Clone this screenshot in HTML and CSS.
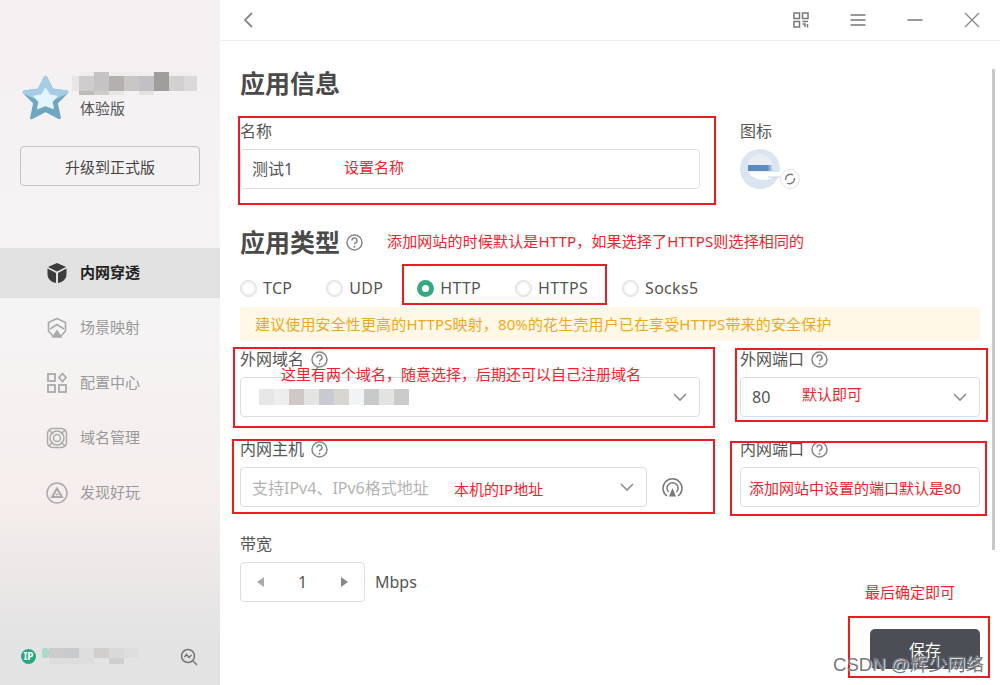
FILE: index.html

```html
<!DOCTYPE html>
<html lang="en">
<head>
    <meta charset="UTF-8">
    <title>应用信息</title>
    <link rel="stylesheet" href="styles.css">
</head>
<body>
<div class="app">
    <!-- Sidebar -->
    <aside class="sidebar">
        <div class="profile">
            <svg class="star" width="51" height="51" viewBox="0 0 48 48">
                <path d="M24 5 L30 17 L44 19 L34 29 L37 43 L24 36 L11 43 L14 29 L4 19 L18 17 Z" fill="#6fa6c0" stroke="#6fa6c0" stroke-width="3" stroke-linejoin="round"/>
                <path d="M24 5 L30 17 L44 19 L33 24 L15 24 L4 19 L18 17 Z" fill="#a6cde3" stroke="#a6cde3" stroke-width="3" stroke-linejoin="round"/>
                <path d="M24 16 L27.500 22 L34 23 L29.500 28 L31 34 L24 31 L17 34 L18.500 28 L14 23 L20.500 22 Z" fill="#e2f4fd" stroke="#e2f4fd" stroke-width="2" stroke-linejoin="round"/>
            </svg>
            <div class="profile-text">
                <svg class="mosaic" width="125" height="23" viewBox="0 0 125 23">
                    <rect x="8" y="0" width="112" height="4" fill="#efecec"/>
                    <rect x="0" y="4" width="7" height="15" fill="#e8e5e6"/>
                    <rect x="7" y="4" width="15" height="15" fill="#cfcccd"/>
                    <rect x="22" y="0" width="15" height="19" fill="#c6c3c4"/>
                    <rect x="37" y="4" width="15" height="15" fill="#b5b0ad"/>
                    <rect x="52" y="4" width="15" height="15" fill="#c9c6c6"/>
                    <rect x="67" y="4" width="15" height="15" fill="#c2c0c4"/>
                    <rect x="82" y="0" width="15" height="19" fill="#a09d9d"/>
                    <rect x="97" y="4" width="15" height="15" fill="#d2d0d1"/>
                    <rect x="112" y="4" width="13" height="15" fill="#dbd9da"/>
                    <rect x="7" y="19" width="15" height="4" fill="#bdbab8"/>
                    <rect x="22" y="19" width="15" height="4" fill="#cfcccc"/>
                    <rect x="37" y="19" width="15" height="4" fill="#e8e5e5"/>
                    <rect x="67" y="19" width="15" height="4" fill="#e4e1e2"/>
                </svg>
                <div class="edition">体验版</div>
            </div>
        </div>
        <button class="upgrade">升级到正式版</button>

        <nav class="nav">
            <a class="nav-item active">
                <svg width="22" height="22" viewBox="0 0 22 22">
                    <path d="M11 1 L20 5 L11 9.500 L2 5 Z" fill="#3c3c3c"/>
                    <path d="M1.500 6.500 L10 11 V21 C5 20 1.500 17 1.500 12 Z" fill="#3c3c3c"/>
                    <path d="M20.500 6.500 L12 11 V21 C17 20 20.500 17 20.500 12 Z" fill="#3c3c3c"/>
                </svg>
                <span>内网穿透</span>
            </a>
            <a class="nav-item">
                <svg width="22" height="22" viewBox="0 0 22 22" fill="none" stroke="#aaa" stroke-width="1.600">
                    <path d="M11 1.500 L19.500 5.500 V14 L15 19 H7 L2.500 14 V5.500 Z"/>
                    <path d="M4 12 L11 7.500 L18 12"/>
                    <path d="M7 20 L11 14 L15 20 Z" fill="#aaa"/>
                </svg>
                <span>场景映射</span>
            </a>
            <a class="nav-item">
                <svg width="22" height="22" viewBox="0 0 22 22" fill="none" stroke="#aaa" stroke-width="1.800">
                    <rect x="2" y="2" width="7" height="7"/>
                    <path d="M16.500 1.500 L20 5.500 L16.500 9.500 L13 5.500 Z"/>
                    <rect x="2" y="13" width="7" height="7"/>
                    <rect x="13" y="13" width="7" height="7"/>
                </svg>
                <span>配置中心</span>
            </a>
            <a class="nav-item">
                <svg width="22" height="22" viewBox="0 0 22 22" fill="none" stroke="#aaa" stroke-width="1.500">
                    <rect x="1.500" y="1.500" width="19" height="19" rx="5"/>
                    <circle cx="11" cy="11" r="7"/>
                    <circle cx="11" cy="11" r="3.500"/>
                    <path d="M3 3 L7 7 M19 3 L15 7 M3 19 L7 15 M19 19 L15 15"/>
                </svg>
                <span>域名管理</span>
            </a>
            <a class="nav-item">
                <svg width="22" height="22" viewBox="0 0 22 22" fill="none" stroke="#aaa" stroke-width="1.500">
                    <circle cx="11" cy="11" r="10"/>
                    <path d="M11 6.500 L16 15 H6 Z" stroke-width="2"/>
                    <path d="M9.500 12.500 H12.500" stroke-width="1.500"/>
                </svg>
                <span>发现好玩</span>
            </a>
        </nav>

        <div class="side-foot">
            <span class="ip-badge">IP</span>
            <svg class="mosaic mosaic-ip" width="97" height="19" viewBox="0 0 97 19">
                <rect x="0" y="1" width="7" height="10" rx="3" fill="#a9dcc6"/>
                <rect x="7" y="1" width="15" height="10" fill="#cccccc"/>
                <rect x="22" y="1" width="15" height="10" fill="#c9cacc"/>
                <rect x="37" y="1" width="15" height="10" fill="#dedede"/>
                <rect x="52" y="1" width="15" height="10" fill="#d0cfcd"/>
                <rect x="67" y="1" width="15" height="10" fill="#d9d9d9"/>
                <rect x="82" y="1" width="15" height="10" fill="#dedede"/>
                <rect x="7" y="11" width="45" height="6" fill="#dddddd"/>
                <rect x="67" y="11" width="15" height="6" fill="#cfcfcf"/>
            </svg>
            <svg class="trace" width="18" height="18" viewBox="0 0 18 18" fill="none" stroke="#777" stroke-width="1.500">
                <circle cx="8" cy="8" r="6.500"/>
                <path d="M4.500 9 L6.500 6.500 L9 9.500 L11.500 7"/>
                <path d="M13 13 L17 17"/>
            </svg>
        </div>
    </aside>

    <!-- Main panel -->
    <main class="main">
        <header class="topbar">
            <svg class="back" width="10" height="16" viewBox="0 0 10 16" fill="none" stroke="#888" stroke-width="1.800">
                <path d="M9 1 L2 8 L9 15"/>
            </svg>
            <div class="win-icons">
                <svg width="16" height="16" viewBox="0 0 16 16" fill="none" stroke="#777" stroke-width="1.500">
                    <rect x="1" y="1" width="5.500" height="5.500"/>
                    <rect x="9.500" y="1" width="5.500" height="5.500"/>
                    <rect x="1" y="9.500" width="5.500" height="5.500"/>
                    <path d="M9.500 9.500 H15 M9.500 12 H12 V15 M14.500 12 V15.500"/>
                </svg>
                <svg width="16" height="16" viewBox="0 0 16 16" stroke="#777" stroke-width="1.500">
                    <path d="M0.500 3 H15.500 M0.500 8 H15.500 M0.500 13 H15.500"/>
                </svg>
                <svg width="16" height="16" viewBox="0 0 16 16" stroke="#777" stroke-width="1.500">
                    <path d="M0.500 8 H15.500"/>
                </svg>
                <svg width="16" height="16" viewBox="0 0 16 16" stroke="#888" stroke-width="1.300">
                    <path d="M1 1 L15 15 M15 1 L1 15"/>
                </svg>
            </div>
        </header>

        <div class="form">
            <h2 class="title">应用信息</h2>
            <div class="row row-name">
                <div class="field">
                    <div class="label">名称</div>
                    <div class="input">测试1</div>
                </div>
                <div class="field">
                    <div class="label">图标</div>
                    <svg class="app-icon" width="60" height="40" viewBox="0 0 60 40">
                        <defs>
                            <linearGradient id="logoBar" x1="0" x2="1" y1="0" y2="0">
                                <stop offset="0" stop-color="#5c8cbf"/>
                                <stop offset="0.8" stop-color="#5c8cbf"/>
                                <stop offset="1" stop-color="#c3d3e4"/>
                            </linearGradient>
                        </defs>
                        <circle cx="20" cy="20" r="20" fill="#dbe5ef"/>
                        <circle cx="20" cy="17" r="12" fill="#e9eef4"/>
                        <rect x="8" y="16" width="24" height="6" fill="url(#logoBar)"/>
                        <path d="M8 23 H40 V28 H33 C29 32 15 33 8 23 Z" fill="#fff"/>
                        <path d="M28 28 H40" stroke="#c9d6e2"/>
                        <circle cx="50" cy="30" r="9.500" fill="#fff" stroke="#e4e4e4"/>
                        <path d="M46 28 A5 5 0 0 1 53 26 M54 32 A5 5 0 0 1 47 34 M45.500 31 L46 28 M54.500 29 L54 32" fill="none" stroke="#777" stroke-width="1.400"/>
                    </svg>
                </div>
            </div>

            <h2 class="title title-type">应用类型
                <svg class="help" width="17" height="17" viewBox="0 0 17 17"><use href="#q"/></svg>
            </h2>

            <div class="radios">
                <label class="radio"><i class="dot"></i>TCP</label>
                <label class="radio"><i class="dot"></i>UDP</label>
                <label class="radio"><i class="dot on"></i>HTTP</label>
                <label class="radio"><i class="dot"></i>HTTPS</label>
                <label class="radio"><i class="dot"></i>Socks5</label>
            </div>
            <div class="notice">建议使用安全性更高的HTTPS映射&#xFF0C;80%的花生壳用户已在享受HTTPS带来的安全保护</div>

            <div class="row row-first">
                <div class="field">
                    <div class="label">外网域名
                        <svg class="help" width="17" height="17" viewBox="0 0 17 17"><use href="#q"/></svg>
                    </div>
                    <div class="input select">
                        <svg class="mosaic" width="158" height="18" viewBox="0 0 158 18">
                            <rect x="7" y="1" width="15" height="16" fill="#e6e6e6"/>
                            <rect x="22" y="1" width="15" height="16" fill="#ededed"/>
                            <rect x="37" y="1" width="15" height="16" fill="#cdc9c6"/>
                            <rect x="52" y="1" width="15" height="16" fill="#e4e4e2"/>
                            <rect x="67" y="1" width="15" height="16" fill="#c9cacf"/>
                            <rect x="82" y="1" width="15" height="16" fill="#d8d6d0"/>
                            <rect x="97" y="1" width="15" height="16" fill="#f2f3f5"/>
                            <rect x="112" y="1" width="15" height="16" fill="#c8c9c9"/>
                            <rect x="127" y="1" width="15" height="16" fill="#e3e3e1"/>
                            <rect x="142" y="1" width="15" height="16" fill="#cbcbcb"/>
                        </svg>
                        <svg class="chev" width="14" height="8" viewBox="0 0 14 8" fill="none" stroke="#8a8a8a" stroke-width="1.600"><path d="M1 1 L7 7 L13 1"/></svg>
                    </div>
                </div>
                <div class="field">
                    <div class="label">外网端口
                        <svg class="help" width="17" height="17" viewBox="0 0 17 17"><use href="#q"/></svg>
                    </div>
                    <div class="input select">80
                        <svg class="chev" width="14" height="8" viewBox="0 0 14 8" fill="none" stroke="#8a8a8a" stroke-width="1.600"><path d="M1 1 L7 7 L13 1"/></svg>
                    </div>
                </div>
            </div>

            <div class="row row-second">
                <div class="field">
                    <div class="label">内网主机
                        <svg class="help" width="17" height="17" viewBox="0 0 17 17"><use href="#q"/></svg>
                    </div>
                    <div class="host">
                        <div class="input select placeholder">支持IPv4、IPv6格式地址
                            <svg class="chev" width="14" height="8" viewBox="0 0 14 8" fill="none" stroke="#8a8a8a" stroke-width="1.600"><path d="M1 1 L7 7 L13 1"/></svg>
                        </div>
                        <svg class="radar" width="21" height="21" viewBox="0 0 21 21" fill="none" stroke="#777" stroke-width="1.500">
                            <path d="M5 19 A9.500 9.500 0 1 1 16 19"/>
                            <path d="M6.500 15 A5.500 5.500 0 1 1 14.500 15"/>
                            <path d="M10.500 11 L14 19.500 H7 Z" fill="#777" stroke="none"/>
                        </svg>
                    </div>
                </div>
                <div class="field">
                    <div class="label">内网端口
                        <svg class="help" width="17" height="17" viewBox="0 0 17 17"><use href="#q"/></svg>
                    </div>
                    <div class="input"></div>
                </div>
            </div>

            <div class="band">
                <div class="label">带宽</div>
                <div class="band-row">
                    <div class="stepper">
                        <i class="tri tri-left"></i>
                        <span>1</span>
                        <i class="tri tri-right"></i>
                    </div>
                    <span class="unit">Mbps</span>
                </div>
            </div>

            <div class="actions">
                <button class="save">保存</button>
            </div>
        </div>
        <div class="scrollbar"></div>
    </main>

    <!-- Screenshot annotations lying over the form -->
    <div class="notes">
        <div class="box box-name"></div>
        <div class="box box-http"></div>
        <div class="box box-domain"></div>
        <div class="box box-wport"></div>
        <div class="box box-host"></div>
        <div class="box box-nport"></div>
        <div class="box box-save"></div>
        <span class="note note-name">设置名称</span>
        <span class="note note-type">添加网站的时候默认是HTTP&#xFF0C;如果选择了HTTPS则选择相同的</span>
        <span class="note note-domain">这里有两个域名&#xFF0C;随意选择&#xFF0C;后期还可以自己注册域名</span>
        <span class="note note-wport">默认即可</span>
        <span class="note note-host">本机的IP地址</span>
        <span class="note note-nport">添加网站中设置的端口默认是80</span>
        <span class="note note-save">最后确定即可</span>
        <span class="watermark">CSDN @辉少网络</span>
    </div>

    <svg class="defs" width="0" height="0">
        <symbol id="q" viewBox="0 0 17 17">
            <circle cx="8.500" cy="8.500" r="7.500" fill="none" stroke="#888" stroke-width="1.500"/>
            <path d="M6 6.500 A2.500 2.500 0 1 1 9.500 8.800 C8.800 9.200 8.500 9.600 8.500 10.500" fill="none" stroke="#888" stroke-width="1.500"/>
            <circle cx="8.500" cy="12.700" r="1" fill="#888"/>
        </symbol>
    </svg>
</div>
</body>
</html>
```

FILE: styles.css

```css
* { box-sizing: border-box; }

body {
    margin: 0;
    font-family: "Noto Sans", "Noto Sans CJK SC", sans-serif;
    color: #555;
    background: #fff;
}
.app {
    position: relative;
    display: flex;
    width: 1000px; height: 685px;
    overflow: hidden;
}
.defs { position: absolute; }

/* Sidebar */
.sidebar {
    width: 220px;
    flex-shrink: 0;
    display: flex;
    flex-direction: column;
    padding-top: 72px;
    background: linear-gradient(#f5f0f1 0, #f5f4f5 300px, #f5eeec 500px, #e3e3e3 640px);
}
.profile {
    display: flex;
    align-items: flex-start;
    height: 74px;
    padding-left: 20px;
}
.star { display: block; margin: 0 1px 0 0; }
.mosaic { display: block; filter: blur(0.6px); }
.edition {
    margin: 2px 0 0 8px;
    font-size: 15px;
    line-height: 22px;
    color: #555;
}
.upgrade {
    display: block;
    margin: 0 20px;
    width: 180px; height: 40px;
    border: 1px solid #c4c2c2;
    border-radius: 4px;
    background: transparent;
    font-family: inherit;
    font-size: 15px;
    color: #444;
}
.nav {
    display: flex;
    flex-direction: column;
    gap: 5px;
    margin-top: 62px;
}
.nav-item {
    display: flex;
    align-items: center;
    gap: 12px;
    height: 50px;
    padding-left: 46px;
    font-size: 15px;
    color: #999;
}
.nav-item span { padding-bottom: 4px; }
.nav-item.active {
    background: #e1e1e1;
    color: #222;
    font-weight: 700;
}
.side-foot {
    display: flex;
    align-items: center;
    margin-top: auto;
    height: 19px;
    margin-bottom: 19px;
    padding-left: 21px;
}
.ip-badge {
    width: 15px; height: 15px;
    border-radius: 50%;
    background: #27a87b;
    color: #fff;
    font-size: 10px;
    line-height: 15px;
    text-align: center;
    font-weight: 700;
}
.mosaic-ip { margin-left: 6px; }
.trace { margin-left: 41px; }

/* Main panel */
.main {
    position: relative;
    flex: 1;
}
.topbar {
    display: flex;
    align-items: center;
    justify-content: space-between;
    height: 41px;
    padding: 0 20px 0 23px;
    border-bottom: 1px solid #eee;
}
.win-icons {
    display: flex;
    gap: 41px;
}
.win-icons svg, .back { display: block; }

.form { padding: 26px 20px 0; }
.title {
    display: flex;
    align-items: center;
    gap: 6px;
    height: 34px;
    margin: 0;
    padding-bottom: 2px;
    font-size: 25px;
    line-height: 32px;
    font-weight: 700;
    color: #4a4a4a;
}
.title-type { margin-top: 37px; }
.row {
    display: grid;
    grid-template-columns: 460px 240px;
    column-gap: 40px;
}
.row-name { margin-top: 20px; }
.row-first { margin-top: 8px; }
.row-second { margin-top: 22px; }
.label {
    display: flex;
    align-items: center;
    gap: 7px;
    height: 20px;
    margin-bottom: 8px;
    font-size: 16px;
    line-height: 20px;
    color: #555;
}
.help { display: block; }
.input {
    display: flex;
    align-items: center;
    justify-content: space-between;
    height: 40px;
    padding: 0 12px 0 11px;
    border: 1px solid #ddd;
    border-radius: 4px;
    background: #fff;
    font-size: 16px;
    color: #555;
}
.row-name .input { padding-bottom: 3px; }
.placeholder { color: #b3b3b3; flex: 1; }
.chev { display: block; }
.host {
    display: flex;
    align-items: center;
    gap: 15px;
    padding-right: 17px;
}
.radar { display: block; }
.app-icon { display: block; }

.radios {
    display: flex;
    gap: 34px;
    margin-top: 18px;
}
.radio {
    display: flex;
    align-items: center;
    gap: 6px;
    height: 20px;
    font-size: 16px;
    letter-spacing: 0.300px;
    color: #555;
}
.dot {
    width: 17px; height: 17px;
    border: 1px solid #ddd;
    border-radius: 50%;
    box-shadow: inset 0 0 3px #ccc;
}
.dot.on {
    border: 5px solid #38a882;
    box-shadow: none;
    background: #fff;
}
.notice {
    height: 34px;
    margin-top: 9px;
    padding-left: 15px;
    background: #fff8e6;
    border-radius: 4px;
    color: #eea820;
    font-size: 15px;
    line-height: 35px;
    letter-spacing: 0.140px;
}

.band { margin-top: 27px; }
.band-row {
    display: flex;
    align-items: center;
    gap: 10px;
}
.stepper {
    display: flex;
    align-items: center;
    justify-content: space-between;
    width: 125px; height: 40px;
    padding: 0 16px;
    border: 1px solid #ddd;
    border-radius: 4px;
    font-size: 16px;
    color: #555;
}
.tri {
    width: 0; height: 0;
    border-top: 5px solid transparent;
    border-bottom: 5px solid transparent;
}
.tri-left { border-right: 7px solid #aaa; }
.tri-right { border-left: 7px solid #888; }
.unit { font-size: 16px; color: #555; }

.actions {
    display: flex;
    justify-content: flex-end;
    margin-top: 27px;
}
.save {
    width: 110px; height: 40px;
    border: 0;
    border-radius: 5px;
    background: #4c4e55;
    color: #fff;
    font-family: inherit;
    font-size: 16px;
    padding: 0;
}
.scrollbar {
    position: absolute;
    top: 69px; right: 5px;
    width: 3px; height: 481px;
    background: #c8c8c8;
}

/* Annotations */
.notes {
    position: absolute;
    top: 0; left: 0;
    width: 100%; height: 100%;
    pointer-events: none;
}
.box {
    position: absolute;
    border: 2px solid #ed1c24;
}
.box-name { left: 238px; top: 116px; width: 478px; height: 89px; }
.box-http { left: 402px; top: 264px; width: 205px; height: 41px; }
.box-domain { left: 233px; top: 347px; width: 482px; height: 81px; }
.box-wport { left: 735px; top: 348px; width: 253px; height: 74px; }
.box-host { left: 232px; top: 439px; width: 483px; height: 75px; }
.box-nport { left: 730px; top: 441px; width: 257px; height: 75px; }
.box-save { left: 848px; top: 616px; width: 142px; height: 62px; }
.note {
    position: absolute;
    font-size: 15px;
    line-height: 20px;
    color: #f0222e;
    white-space: nowrap;
}
.note-name { left: 344px; top: 157px; }
.note-type { left: 387px; top: 231px; letter-spacing: 0.150px; }
.note-domain { left: 281px; top: 364px; }
.note-wport { left: 802px; top: 384px; }
.note-host { left: 454px; top: 479px; }
.note-nport { left: 749px; top: 478px; }
.note-save { left: 865px; top: 582px; }
.watermark {
    position: absolute;
    left: 833px; top: 654px;
    font-family: "Liberation Sans", "Noto Sans CJK SC", sans-serif;
    font-size: 18.600px;
    line-height: 22px;
    color: #777;
    text-shadow: 1px 1px 1px #fff;
    white-space: nowrap;
}
```
